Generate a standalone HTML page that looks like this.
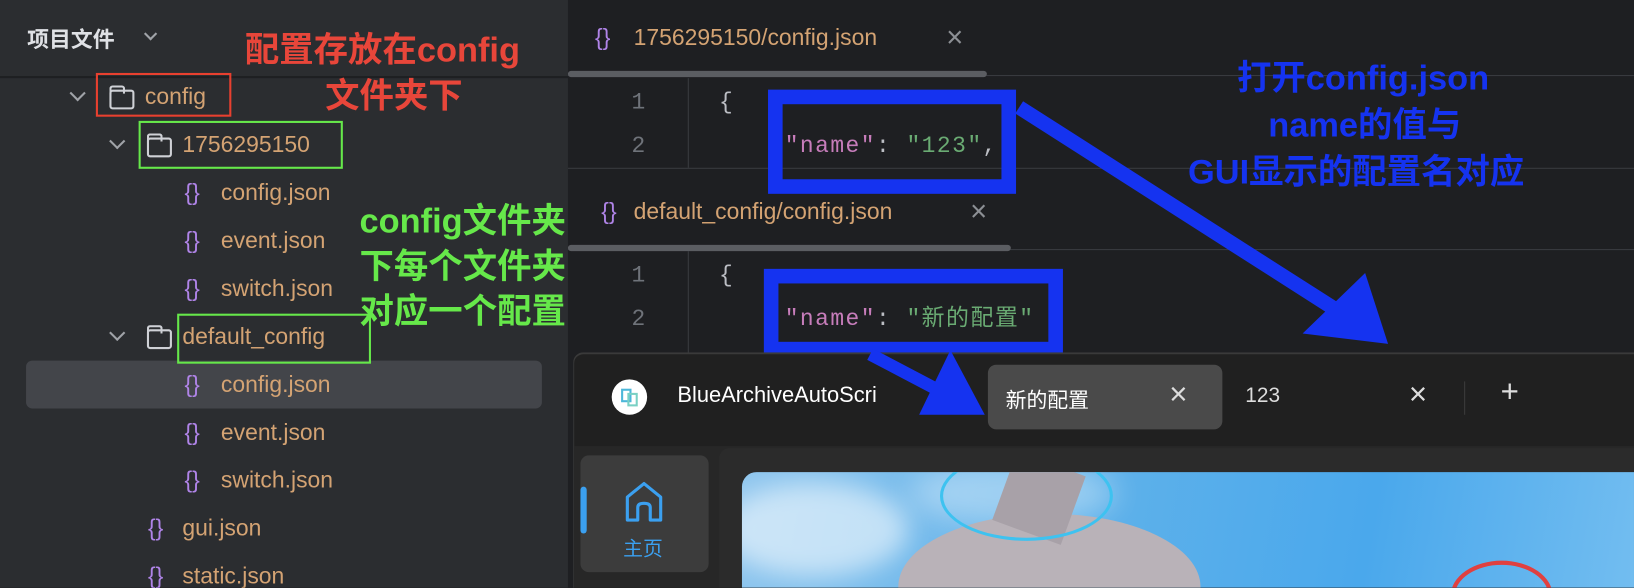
<!DOCTYPE html>
<html><head><meta charset="utf-8"><style>
html,body{margin:0;padding:0;width:1634px;height:588px;overflow:hidden;background:#1e1f22}
#w{position:absolute;left:0;top:0;width:1568px;height:564px;overflow:hidden;transform:scale(1.04209);transform-origin:0 0;font-family:"Liberation Sans","Noto Sans CJK SC",sans-serif}
.a{position:absolute;white-space:nowrap}
.side{position:absolute;left:0;top:0;width:545px;height:564px;background:#2b2d30}
.t{font-size:22px;color:#d4a373;line-height:26px}
.br{color:#b084e8;font-size:22px;line-height:26px}
.mono{font-family:"Liberation Mono","Noto Sans CJK SC",monospace;font-size:22px;letter-spacing:1.4px;line-height:26px}
.ln{color:#6f737a}
.ann{font-weight:bold;font-size:33px;line-height:40px}
.x{color:#8c8f94;font-size:28px;line-height:28px}
.fold{position:absolute;width:24px;height:19px;border:2px solid #cfd1d6;border-radius:3px;box-sizing:border-box}
.fold:before{content:"";position:absolute;left:-2px;top:-6px;width:11px;height:6px;border:2px solid #cfd1d6;border-bottom:none;border-radius:3px 3px 0 0}
.chev{position:absolute;width:9px;height:9px;border-right:2px solid #a0a3a8;border-bottom:2px solid #a0a3a8;transform:rotate(45deg)}
</style></head><body><div id="w">
<div class="side"></div>
<div class="a" style="left:26px;top:22px;font-size:21px;font-weight:bold;color:#dfe1e5">项目文件</div>
<div class="chev" style="left:140px;top:28px;width:7px;height:7px"></div>
<div class="a" style="left:0;top:73px;width:545px;height:2px;background:#1e1f22"></div>
<div class="a" style="left:25px;top:346px;width:495px;height:46px;background:#43454a;border-radius:6px"></div>
<div class="chev" style="left:69px;top:84px"></div><div class="fold" style="left:105px;top:86px"></div><div class="a t" style="left:139px;top:80px">config</div>
<div class="chev" style="left:107px;top:130px"></div><div class="fold" style="left:141px;top:132px"></div><div class="a t" style="left:175px;top:126px">1756295150</div>
<div class="a br" style="left:177px;top:172px">{}</div><div class="a t" style="left:212px;top:172px">config.json</div>
<div class="a br" style="left:177px;top:218px">{}</div><div class="a t" style="left:212px;top:218px">event.json</div>
<div class="a br" style="left:177px;top:264px">{}</div><div class="a t" style="left:212px;top:264px">switch.json</div>
<div class="chev" style="left:107px;top:314px"></div><div class="fold" style="left:141px;top:316px"></div><div class="a t" style="left:175px;top:310px">default_config</div>
<div class="a br" style="left:177px;top:356px">{}</div><div class="a t" style="left:212px;top:356px">config.json</div>
<div class="a br" style="left:177px;top:402px">{}</div><div class="a t" style="left:212px;top:402px">event.json</div>
<div class="a br" style="left:177px;top:448px">{}</div><div class="a t" style="left:212px;top:448px">switch.json</div>
<div class="a br" style="left:142px;top:494px">{}</div><div class="a t" style="left:175px;top:494px">gui.json</div>
<div class="a br" style="left:142px;top:540px">{}</div><div class="a t" style="left:175px;top:540px">static.json</div>
<div class="a" style="left:92px;top:70px;width:126px;height:38px;border:2px solid #e8402f"></div>
<div class="a" style="left:133px;top:116px;width:192px;height:42px;border:2px solid #66e84a"></div>
<div class="a" style="left:170px;top:301px;width:182px;height:44px;border:2px solid #66e84a"></div>
<div class="a ann" style="left:235px;top:28px;color:#e8463a">配置存放在config</div>
<div class="a ann" style="left:312px;top:72px;color:#e8463a">文件夹下</div>
<div class="a ann" style="left:345px;top:192px;color:#66e84a">config文件夹</div>
<div class="a ann" style="left:345px;top:236px;color:#66e84a">下每个文件夹</div>
<div class="a ann" style="left:345px;top:279px;color:#66e84a">对应一个配置</div>
<div class="a br" style="left:571px;top:23px">{}</div><div class="a t" style="left:608px;top:23px">1756295150/config.json</div>
<div class="a x" style="left:908px;top:22px">×</div>
<div class="a" style="left:545px;top:72px;width:1023px;height:1px;background:#393b40"></div>
<div class="a" style="left:545px;top:68px;width:402px;height:6px;background:#5b5d62;border-radius:3px"></div>
<div class="a" style="left:660px;top:75px;width:1px;height:86px;background:#393b40"></div>
<div class="a mono ln" style="left:606px;top:86px">1</div><div class="a mono ln" style="left:606px;top:128px">2</div>
<div class="a mono" style="left:690px;top:86px;color:#bcbec4">{</div>
<div class="a mono" style="left:753px;top:128px;color:#bcbec4"><span style="color:#c77dbb">"name"</span>: <span style="color:#6aab73">"123"</span>,</div>
<div class="a" style="left:545px;top:161px;width:1023px;height:1px;background:#393b40"></div>
<div class="a br" style="left:577px;top:190px">{}</div><div class="a t" style="left:608px;top:190px">default_config/config.json</div>
<div class="a x" style="left:931px;top:189px">×</div>
<div class="a" style="left:545px;top:239px;width:1023px;height:1px;background:#393b40"></div>
<div class="a" style="left:545px;top:235px;width:425px;height:6px;background:#5b5d62;border-radius:3px"></div>
<div class="a" style="left:660px;top:241px;width:1px;height:100px;background:#393b40"></div>
<div class="a mono ln" style="left:606px;top:252px">1</div><div class="a mono ln" style="left:606px;top:294px">2</div>
<div class="a mono" style="left:690px;top:252px;color:#bcbec4">{</div>
<div class="a mono" style="left:753px;top:294px;color:#bcbec4"><span style="color:#c77dbb">"name"</span>: <span style="color:#6aab73">"新的配置"</span></div>
<div class="a" style="left:737px;top:86px;width:210px;height:72px;border:14px solid #1533f0"></div>
<div class="a" style="left:733px;top:258px;width:259px;height:56px;border:14px solid #1533f0"></div>
<div class="a ann" style="left:1187px;top:55px;color:#1533f0">打开config.json</div>
<div class="a ann" style="left:1217px;top:100px;color:#1533f0">name的值与</div>
<div class="a ann" style="left:1140px;top:145px;color:#1533f0">GUI显示的配置名对应</div>
<div class="a" style="left:550px;top:338px;width:1018px;height:226px;background:#202020;border-top:2px solid #3a3a3a;border-left:1px solid #3a3a3a;border-radius:10px 0 0 0"></div>
<div class="a" style="left:587px;top:364px;width:34px;height:34px;border-radius:50%;background:#fff"></div>
<div class="a" style="left:596px;top:373px;width:10px;height:13px;border:2px solid #4cb7d9;box-sizing:border-box"></div>
<div class="a" style="left:602px;top:377px;width:10px;height:13px;border:2px solid #7ad0c4;box-sizing:border-box"></div>
<div class="a" style="left:650px;top:368px;color:#fff;font-size:21px">BlueArchiveAutoScri</div>
<div class="a" style="left:948px;top:350px;width:225px;height:62px;background:#4a4a4a;border-radius:8px"></div>
<div class="a" style="left:965px;top:368px;color:#fff;font-size:20px">新的配置</div>
<div class="a" style="left:1122px;top:364px;color:#ddd;font-size:30px;line-height:30px">×</div>
<div class="a" style="left:1195px;top:369px;color:#ddd;font-size:20px">123</div>
<div class="a" style="left:1352px;top:364px;color:#ddd;font-size:30px;line-height:30px">×</div>
<div class="a" style="left:1405px;top:366px;width:1px;height:32px;background:#3c3c3c"></div>
<div class="a" style="left:1440px;top:360px;color:#ddd;font-size:30px">+</div>
<div class="a" style="left:551px;top:428px;width:1017px;height:136px;background:#272727"></div>
<div class="a" style="left:557px;top:437px;width:123px;height:112px;background:#3c3c3c;border-radius:8px"></div>
<div class="a" style="left:557px;top:467px;width:6px;height:45px;background:#3ba0f0;border-radius:3px"></div>
<svg class="a" style="left:598px;top:461px" width="40" height="42" viewBox="0 0 40 42"><path d="M4 38 V16 L20 3 L36 16 V38 H26 V26 Q26 22 20 22 Q14 22 14 26 V38 Z" fill="none" stroke="#3ba0f0" stroke-width="3" stroke-linejoin="round"/></svg>
<div class="a" style="left:598px;top:512px;color:#3ba0f0;font-size:19px">主页</div>
<div class="a" style="left:690px;top:430px;width:878px;height:134px;background:#2b2b2b;border-radius:10px 0 0 0"></div>
<div class="a" style="left:712px;top:453px;width:856px;height:111px;border-radius:14px 0 0 0;overflow:hidden;background:linear-gradient(100deg,#8fc6ee,#5eb1ea 40%,#4aa8ec 70%,#72bdf0)">
 <div class="a" style="left:-20px;top:10px;width:180px;height:90px;border-radius:50%;background:rgba(255,255,255,.55);filter:blur(12px)"></div>
 <div class="a" style="left:160px;top:-10px;width:200px;height:60px;border-radius:50%;background:rgba(255,255,255,.35);filter:blur(14px)"></div>
 <div class="a" style="left:150px;top:40px;width:290px;height:140px;border-radius:50% 50% 0 0;background:#b9b2b8"></div>
 <div class="a" style="left:250px;top:-10px;width:70px;height:70px;background:#a8a1a8;transform:rotate(20deg)"></div>
 <div class="a" style="left:190px;top:-20px;width:160px;height:80px;border:3px solid #3ec2f0;border-radius:50%"></div>
 <div class="a" style="left:680px;top:85px;width:90px;height:60px;border:4px solid #e04040;border-radius:50%"></div>
</div>
<svg class="a" style="left:0;top:0" width="1568" height="564" viewBox="0 0 1568 564">
<line x1="978" y1="103" x2="1280" y2="296" stroke="#1533f0" stroke-width="14"/>
<polygon points="1310,262 1332,330 1250,320" fill="#1533f0"/>
<line x1="835" y1="340" x2="915" y2="382" stroke="#1533f0" stroke-width="12"/>
<polygon points="912,336 945,398 882,398" fill="#1533f0"/>
</svg>
</div></body></html>
